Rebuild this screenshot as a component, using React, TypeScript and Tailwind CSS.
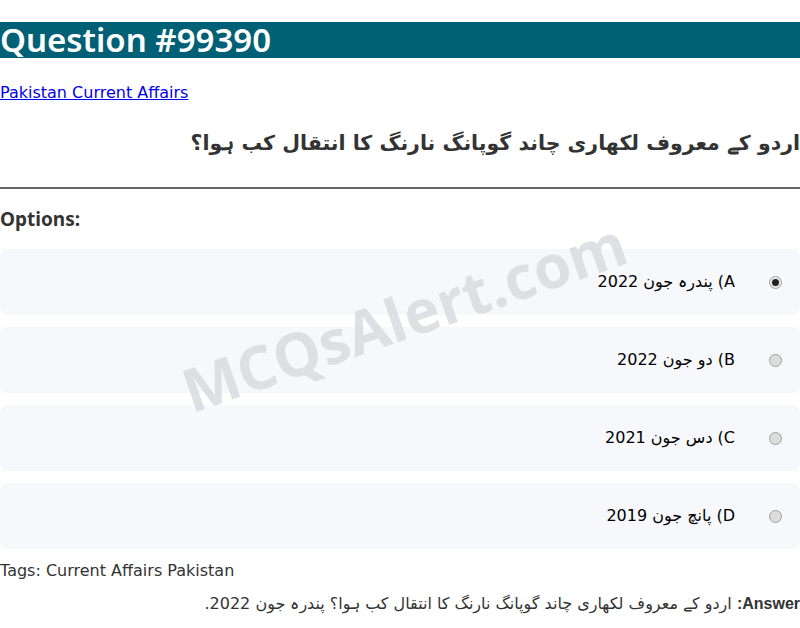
import React from "react";

const options = [
  { label: "A) پندرہ جون 2022", checked: true },
  { label: "B) دو جون 2022", checked: false },
  { label: "C) دس جون 2021", checked: false },
  { label: "D) پانچ جون 2019", checked: false },
];

export default function App() {
  return (
    <div className="relative w-[800px] h-[628px] overflow-hidden bg-white text-[#333]" style={{ fontFamily: '"DejaVu Sans", sans-serif' }}>
      <div className="pt-[22px]">
        <h1 className="bg-[#006075] text-white text-[33px] font-semibold leading-[36px] h-[36px] whitespace-nowrap" style={{ fontFamily: '"Noto Sans", sans-serif' }}>Question #99390</h1>
      </div>
      <div className="mt-[23px]">
        <a href="#" className="text-[#0000ee] underline text-[16px] leading-[19px]">Pakistan Current Affairs</a>
      </div>
      <h2 dir="rtl" className="mt-[23px] text-[20.5px] font-bold leading-[30px] text-[#333] text-right">
        اردو کے معروف لکھاری چاند گوپانگ نارنگ کا انتقال کب ہوا؟
      </h2>
      <hr className="mt-[29px] border-t-2 border-[#666]" />
      <div className="mt-[18px] text-[19px] font-bold leading-[24px] text-[#333]" style={{ fontFamily: '"Noto Sans", sans-serif' }}>Options:</div>
      <div className="mt-[18px] flex flex-col gap-[12px]">
        {options.map((o) => (
          <div key={o.label} dir="rtl" className="h-[66px] rounded-[8px] bg-[#f7f8fc] flex items-center pr-[18px]">
            <span className={"w-[13px] h-[13px] rounded-full border border-[#a0a0a0] flex items-center justify-center " + (o.checked ? "bg-[#e8e8e8]" : "bg-[#dcdcdc]")}>
              {o.checked && <span className="w-[7px] h-[7px] rounded-full bg-[#222]" />}
            </span>
            <span className="mr-[34px] text-[16px] text-black leading-[20px]">{o.label}</span>
          </div>
        ))}
      </div>
      <div className="mt-[12px] text-[16px] leading-[20px] text-[#333]">Tags: Current Affairs Pakistan</div>
      <div dir="rtl" className="mt-[13px] text-[16px] leading-[20px] text-[#333] text-right">
        <span className="font-bold" style={{ fontFamily: '"Liberation Sans", sans-serif' }}>Answer:</span> اردو کے معروف لکھاری چاند گوپانگ نارنگ کا انتقال کب ہوا؟ پندرہ جون 2022.
      </div>
      <div className="pointer-events-none absolute left-[404px] top-[316px] -translate-x-1/2 -translate-y-1/2 rotate-[-19deg] whitespace-nowrap text-[60px] font-bold text-[#dcdde0] opacity-90 leading-none" style={{ fontFamily: '"Open Sans", sans-serif' }}>
        MCQsAlert.com
      </div>
    </div>
  );
}
